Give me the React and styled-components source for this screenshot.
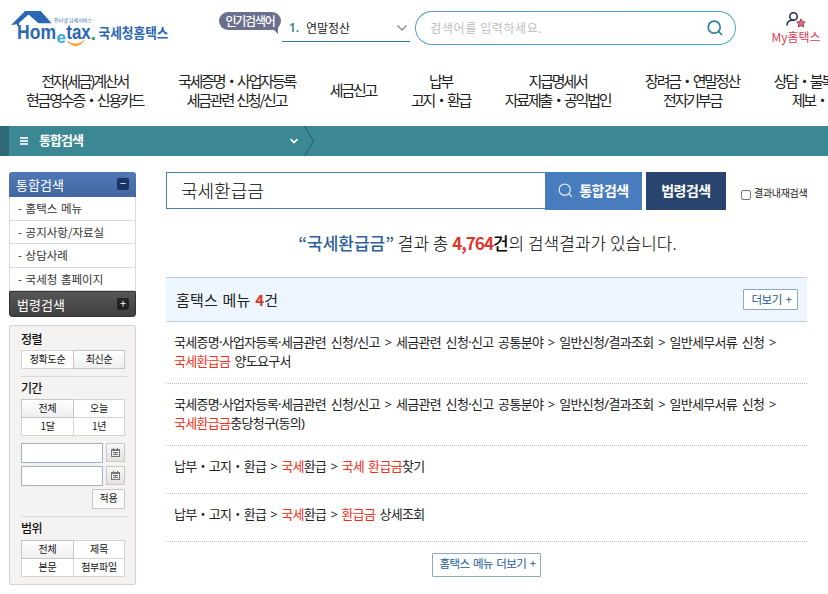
import React from 'react';
import styled, { createGlobalStyle, css } from 'styled-components';

const GlobalStyle = createGlobalStyle`
  * {
    box-sizing: border-box;
  }

  body {
    margin: 0;
    width: 828px;
    height: 594px;
    overflow: hidden;
    background: #fff;
    color: #222;
    font-family: "Noto Sans CJK KR", "Noto Sans", sans-serif;
    font-size: 13px;
  }

  ul {
    margin: 0;
    padding: 0;
    list-style: none;
  }

  button, input {
    font-family: inherit;
    margin: 0;
    padding: 0;
  }
`;

const menus = [
  ['전자(세금)계산서', '현금영수증・신용카드'],
  ['국세증명・사업자등록', '세금관련 신청/신고'],
  ['세금신고'],
  ['납부', '고지・환급'],
  ['지급명세서', '자료제출・공익법인'],
  ['장려금・연말정산', '전자기부금'],
  ['상담・불복・고충', '제보・기타'],
];

const sideMenus = ['홈택스 메뉴', '공지사항/자료실', '상담사례', '국세청 홈페이지'];

const Logo = () => (
  <LogoSvg viewBox="0 0 170 44" aria-label="국세청홈택스">
    <path d="M1 19 L15 5 H30.7 L41.7 17.3 H28.5 L18.5 8.6 L9 17 V20 H7 V18.3 Z" fill="#2b67b2" />
    <path d="M57 35 Q66 45 74.5 34.5 Q66 41 57 35 Z" fill="#f4a63c" stroke="#f4a63c" strokeWidth="0.7" />
    <text x="44" y="15.5" fontSize="5" fill="#2b67b2" textLength="38" lengthAdjust="spacingAndGlyphs">
      인터넷 납세서비스
    </text>
    <g fontFamily="Liberation Sans, sans-serif" fontWeight="700" fill="#2b67b2">
      <text x="7" y="32.5" fontSize="20" textLength="39" lengthAdjust="spacingAndGlyphs">Hom</text>
      <text x="46.5" y="37" fontSize="17" fill="#36a9df">e</text>
      <text x="56.3" y="32.5" fontSize="20" textLength="24.5" lengthAdjust="spacingAndGlyphs">tax</text>
      <text x="80.5" y="33.5" fontSize="20" fill="#35a853">.</text>
    </g>
    <text x="88.5" y="31.5" fontSize="13.5" fontWeight="700" fill="#2b67b2" textLength="70" lengthAdjust="spacingAndGlyphs">
      국세청홈택스
    </text>
  </LogoSvg>
);

const SearchIcon = ({ size, color, width = 1.5 }) => (
  <svg width={size} height={size} viewBox="0 0 16 16" fill="none" stroke={color} strokeWidth={width}>
    <circle cx="7.2" cy="7.2" r="6" />
    <path d="M11.5 11.5 L15 15" />
  </svg>
);

const CalendarIcon = () => (
  <svg width="9" height="9" viewBox="0 0 9 9" fill="none" stroke="#777" shapeRendering="crispEdges">
    <path d="M0.5 1.5 H8.5 V8.5 H0.5 Z M0 2.5 H9 M2.5 0 V2 M6.5 0 V2 M2 4.5 H7 M2 6.5 H7 M4.5 4 V7" />
  </svg>
);

const MyIcon = () => (
  <svg width="20" height="16" viewBox="0 0 20 16" fill="none">
    <circle cx="7.5" cy="4.5" r="3.7" stroke="#23284a" strokeWidth="1.5" />
    <path d="M1 13.5 C1 10 3 8.2 6 8.2 H8" stroke="#23284a" strokeWidth="1.5" />
    <path
      d="M15 6.8 L16.4 9.5 L19.3 10 L17.2 12.1 L17.7 15 L15 13.7 L12.3 15 L12.8 12.1 L10.7 10 L13.6 9.5 Z"
      fill="#ee6178"
      stroke="#6b3550"
      strokeWidth="0.8"
    />
  </svg>
);

const Header = () => (
  <HeaderBox>
    <Logo />
    <Badge>인기검색어</Badge>
    <Keyword>
      <strong>1.</strong>
      <span>연말정산</span>
      <svg width="10" height="6" viewBox="0 0 10 6" fill="none" stroke="#888" strokeWidth="1.3">
        <path d="M0.5 0.5 L5 5 L9.5 0.5" />
      </svg>
    </Keyword>
    <TopSearch>
      <TopSearchInner>
        <span>검색어를 입력하세요.</span>
        <SearchIcon size={16} color="#2f8292" width={1.7} />
      </TopSearchInner>
    </TopSearch>
    <MyPage>
      <MyIcon />
      <span>My홈택스</span>
    </MyPage>
  </HeaderBox>
);

const Sidebar = () => (
  <Side>
    <SideTitle>
      통합검색 <Toggle>−</Toggle>
    </SideTitle>
    <ul>
      {sideMenus.map((name) => (
        <SideItem key={name}>- {name}</SideItem>
      ))}
    </ul>
    <SideTitle $dark>
      법령검색 <Toggle $dark>+</Toggle>
    </SideTitle>

    <Filter>
      <FilterTitle>정렬</FilterTitle>
      <Options>
        <Option>정확도순</Option>
        <Option $on>최신순</Option>
      </Options>
      <Line />
      <FilterTitle>기간</FilterTitle>
      <Options>
        <Option $on>전체</Option>
        <Option>오늘</Option>
        <Option>1달</Option>
        <Option>1년</Option>
      </Options>
      <Dates>
        <DateInput />
        <DateButton><CalendarIcon /></DateButton>
        <DateInput />
        <DateButton><CalendarIcon /></DateButton>
      </Dates>
      <Apply>적용</Apply>
      <Line />
      <FilterTitle>범위</FilterTitle>
      <Options>
        <Option $on>전체</Option>
        <Option>제목</Option>
        <Option>본문</Option>
        <Option>첨부파일</Option>
      </Options>
    </Filter>
  </Side>
);

const longPath = '국세증명·사업자등록·세금관련 신청/신고 > 세금관련 신청·신고 공통분야 > 일반신청/결과조회 > 일반세무서류 신청 >';

const Results = () => (
  <Main>
    <SearchRow>
      <Query defaultValue="국세환급금" />
      <SearchButton>
        <SearchIcon size={15} color="#dce9f7" width={1.3} />
        통합검색
      </SearchButton>
      <SearchButton $law>법령검색</SearchButton>
      <Again>
        <input type="checkbox" />
        <span>결과내재검색</span>
      </Again>
    </SearchRow>
    <Summary>
      <b>“국세환급금”</b> 결과 총 <em>4,764</em><strong>건</strong>의 검색결과가 있습니다.
    </Summary>
    <SectionHead>
      <h2>홈택스 메뉴 <em>4</em>건</h2>
      <More>더보기 +</More>
    </SectionHead>
    <ul>
      <Row $tall>
        <span>{longPath}</span>
        <br />
        <mark>국세환급금</mark> 양도요구서
      </Row>
      <Row $tall>
        <span>{longPath}</span>
        <br />
        <mark>국세환급금</mark>충당청구(동의)
      </Row>
      <Row>
        납부・고지・환급 &gt; <mark>국세</mark>환급 &gt; <mark>국세 환급금</mark>찾기
      </Row>
      <Row>
        납부・고지・환급 &gt; <mark>국세</mark>환급 &gt; <mark>환급금</mark> 상세조회
      </Row>
    </ul>
    <More $wide>홈택스 메뉴 더보기 +</More>
  </Main>
);

const App = () => (
  <>
    <GlobalStyle />
    <Header />
    <Nav>
      {menus.map((lines) => (
        <NavItem key={lines[0]}>
          {lines.map((line) => (
            <span key={line}>{line}</span>
          ))}
        </NavItem>
      ))}
    </Nav>
    <PathBar>
      <Burger><i /><i /><i /></Burger>
      <strong>통합검색</strong>
      <svg width="8" height="6" viewBox="0 0 8 6" fill="none" stroke="#fff" strokeWidth="1.7">
        <path d="M0.5 1 L4 4.5 L7.5 1" />
      </svg>
      <svg width="10" height="30" viewBox="0 0 10 30" fill="none" stroke="#265f6b">
        <path d="M0.5 0 L9.5 15 L0.5 30" />
      </svg>
    </PathBar>
    <Content>
      <Sidebar />
      <Results />
    </Content>
  </>
);

export default App;

const HeaderBox = styled.header`
  display: flex;
  align-items: flex-start;
  height: 60px;
  padding: 6px 0 0 10px;
`;

const LogoSvg = styled.svg`
  width: 170px;
  height: 44px;
  flex-shrink: 0;
`;

const Badge = styled.div`
  position: relative;
  width: 62px;
  height: 18px;
  margin: 6px 0 0 39px;
  border-radius: 9px;
  background: #6b6f8b;
  color: #fff;
  font-size: 12px;
  font-weight: 500;
  line-height: 17px;
  letter-spacing: -1.2px;
  text-align: center;
  flex-shrink: 0;

  &::after {
    content: '';
    position: absolute;
    right: 3px;
    bottom: -4px;
    border-top: 7px solid #6b6f8b;
    border-left: 7px solid transparent;
  }
`;

const Keyword = styled.div`
  display: flex;
  align-items: center;
  width: 128px;
  height: 36px;
  margin-left: 1px;
  padding: 8px 3px 0 7px;
  border-bottom: 1px solid #2f8292;
  font-size: 12px;
  flex-shrink: 0;

  strong {
    width: 17px;
    color: #2f8292;
    font-family: "Noto Sans", sans-serif;
    font-weight: 600;
  }

  span {
    flex: 1;
  }
`;

const TopSearch = styled.div`
  width: 321px;
  height: 34px;
  margin: 5px 0 0 5px;
  padding: 1.3px;
  border-radius: 17px;
  background: linear-gradient(90deg, #5a93dc, #45aab8);
  flex-shrink: 0;
`;

const TopSearchInner = styled.div`
  display: flex;
  align-items: center;
  justify-content: space-between;
  height: 100%;
  padding: 0 12px 0 14px;
  border-radius: 16px;
  background: #fff;
  color: #bdbdbd;
  font-size: 12px;
  letter-spacing: 0.6px;

  span {
    padding-bottom: 2px;
  }
`;

const MyPage = styled.div`
  display: flex;
  flex-direction: column;
  align-items: center;
  width: 50px;
  margin: 6px 0 0 35px;
  color: #dc3d55;
  font-size: 12px;
  line-height: 17px;
  white-space: nowrap;
  flex-shrink: 0;
`;

const Nav = styled.nav`
  display: flex;
  align-items: center;
  gap: 34.7px;
  height: 66px;
  padding: 0 0 7px 26px;
`;

const NavItem = styled.div`
  display: flex;
  flex-direction: column;
  align-items: center;
  color: #222;
  font-size: 15px;
  line-height: 19px;
  letter-spacing: -2.2px;
  word-spacing: 2px;
  white-space: nowrap;
  flex-shrink: 0;
`;

const PathBar = styled.div`
  display: flex;
  align-items: center;
  height: 30px;
  padding-left: 11px;
  border-left: 9px solid #2f6a76;
  background: #3b8794;

  strong {
    width: 251px;
    margin-left: 11px;
    color: #fff;
    font-size: 13px;
    font-weight: 700;
    line-height: 20px;
    letter-spacing: -1px;
    padding-bottom: 2px;
  }

  svg:last-child {
    margin-left: 6px;
  }
`;

const Burger = styled.span`
  display: flex;
  flex-direction: column;
  gap: 1px;
  width: 8px;

  i {
    height: 2px;
    background: #d9e8eb;
  }
`;

const Content = styled.div`
  display: flex;
  align-items: flex-start;
  gap: 30px;
  padding: 16px 21px 0 9px;
`;

const Side = styled.aside`
  width: 127px;
  flex-shrink: 0;
`;

const SideTitle = styled.div`
  display: flex;
  align-items: center;
  justify-content: space-between;
  height: 25px;
  padding: 0 7px;
  border-radius: 3px 3px 0 0;
  background: linear-gradient(#5078b4, #4367a3);
  color: #fff;
  font-size: 13px;

  ${({ $dark }) => $dark && css`
    height: 26px;
    padding: 0 6px 0 7px;
    border: 1px solid #333;
    border-radius: 0 0 3px 3px;
    background: linear-gradient(#565656, #414141);
  `}
`;

const Toggle = styled.span`
  width: 12px;
  height: 12px;
  margin-bottom: 1px;
  border-radius: 2px;
  background: ${({ $dark }) => ($dark ? '#222' : '#183463')};
  font-size: 11px;
  line-height: 11px;
  text-align: center;
`;

const SideItem = styled.li`
  height: 23.5px;
  padding-left: 8px;
  border: solid #d9d9d9;
  border-width: 0 1px 1px;
  color: #333;
  font-size: 11.5px;
  line-height: 23px;
  word-spacing: 1px;
`;

const Filter = styled.div`
  height: 260px;
  margin-top: 8px;
  padding: 3px 10px 0 11px;
  border: 1px solid #d2d2d2;
  border-radius: 2px;
  background: #f4f3f2;
`;

const FilterTitle = styled.div`
  height: 21px;
  color: #111;
  font-size: 12px;
  font-weight: 500;
  line-height: 19px;
  letter-spacing: -0.6px;
`;

const Options = styled.div`
  display: grid;
  grid-template-columns: 51px 50px;
  gap: 1px;
  width: 104px;
  border: 1px solid #d5d5d5;
  background: #d5d5d5;

  &:last-child {
    margin-top: 1px;
  }
`;

const Option = styled.span`
  height: 17px;
  background: #fff;
  color: #111;
  font-size: 10px;
  line-height: 16px;
  text-align: center;
  letter-spacing: -0.3px;

  ${({ $on }) => $on && css`
    background: linear-gradient(#fff, #eee);
    box-shadow: 0 0 0 1px #c5c5c5;
  `}
`;

const Line = styled.div`
  height: 1px;
  width: 107px;
  margin: 7px 0 1px;
  background: #d8d8d8;
`;

const Dates = styled.div`
  display: grid;
  grid-template-columns: 82px 19px;
  gap: 3px;
  margin-top: 7px;
`;

const DateInput = styled.input`
  width: 82px;
  height: 20px;
  border: 1px solid #a3b2c5;
  background: #fff;
`;

const DateButton = styled.button`
  display: flex;
  align-items: center;
  justify-content: center;
  height: 19px;
  border: 1px solid #c8c8c8;
  background: linear-gradient(#f8f8f8, #e2e2e2);
`;

const Apply = styled.button`
  display: block;
  width: 33px;
  height: 20px;
  margin: 3px 0 0 71px;
  border: 1px solid #c8c8c8;
  border-radius: 1px;
  background: #fafafa;
  color: #111;
  font-size: 10px;
  line-height: 16px;
  padding-bottom: 2px;
  letter-spacing: -0.3px;
`;

const Main = styled.main`
  width: 641px;
`;

const SearchRow = styled.div`
  display: flex;
  height: 38px;
`;

const Query = styled.input`
  width: 379px;
  height: 37px;
  padding: 0 0 2px 14px;
  border: 1px solid #4a7cba;
  border-right: 0;
  outline: 0;
  color: #000;
  font-size: 18px;
  font-weight: 300;
  flex-shrink: 0;
`;

const SearchButton = styled.button`
  display: flex;
  align-items: center;
  justify-content: center;
  gap: 6px;
  width: ${({ $law }) => ($law ? 80 : 97)}px;
  height: 38px;
  margin-left: ${({ $law }) => ($law ? 4 : 0)}px;
  padding-bottom: 2px;
  border: 0;
  background: ${({ $law }) => ($law ? '#2a4470' : '#497cbc')};
  color: #fff;
  font-size: 14px;
  font-weight: 700;
  letter-spacing: -0.5px;
  flex-shrink: 0;
`;

const Again = styled.label`
  display: flex;
  align-items: center;
  gap: 3px;
  margin-left: 15px;
  padding-top: 3px;
  font-size: 10px;
  letter-spacing: -0.3px;
  white-space: nowrap;

  input {
    width: 10px;
    height: 10px;
    margin: 4px 0 0;
    appearance: none;
    border: 1px solid #777;
    border-radius: 2px;
    flex-shrink: 0;
  }
`;

const Summary = styled.p`
  height: 67px;
  margin: 0;
  padding-left: 2px;
  color: #000;
  font-size: 17px;
  font-weight: 300;
  line-height: 66px;
  text-align: center;

  b {
    color: #2d5f98;
    font-weight: 500;
  }

  em {
    color: #dc352c;
    font-style: normal;
    font-weight: 700;
    letter-spacing: -1px;
  }

  strong {
    font-weight: 500;
  }
`;

const SectionHead = styled.div`
  display: flex;
  align-items: center;
  justify-content: space-between;
  height: 45px;
  padding: 0 9px 0 10px;
  border: solid #c2ccd6;
  border-width: 1px 0;
  background: #edf6ff;

  h2 {
    margin: 0;
    color: #222;
    font-size: 15px;
    font-weight: 400;
    letter-spacing: 0.2px;
    word-spacing: 1px;
  }

  em {
    color: #dc352c;
    font-style: normal;
    font-weight: 700;
  }
`;

const More = styled.button`
  display: block;
  width: 55px;
  height: 21px;
  border: 1px solid #8ba8c4;
  border-radius: 1px;
  background: #fff;
  color: #235a96;
  font-size: 11.5px;
  line-height: 17px;
  letter-spacing: -0.4px;
  word-spacing: 1.5px;
  padding: 0 0 1px 2px;
  white-space: nowrap;

  ${({ $wide }) => $wide && css`
    width: 109px;
    height: 24px;
    margin: 11px auto 0;
    padding-bottom: 3px;
    letter-spacing: -0.6px;
  `}
`;

const Row = styled.li`
  height: ${({ $tall }) => ($tall ? 62 : 48)}px;
  padding: 11px 0 0 8px;
  border-bottom: 1px dotted #bbb;
  color: #222;
  font-family: "Noto Sans", "Noto Sans CJK KR", sans-serif;
  font-size: 13px;
  line-height: 19px;
  letter-spacing: -0.7px;
  word-spacing: 1.5px;
  white-space: nowrap;

  span {
    word-spacing: 2px;
  }

  mark {
    background: none;
    color: #f0301c;
  }
`;
